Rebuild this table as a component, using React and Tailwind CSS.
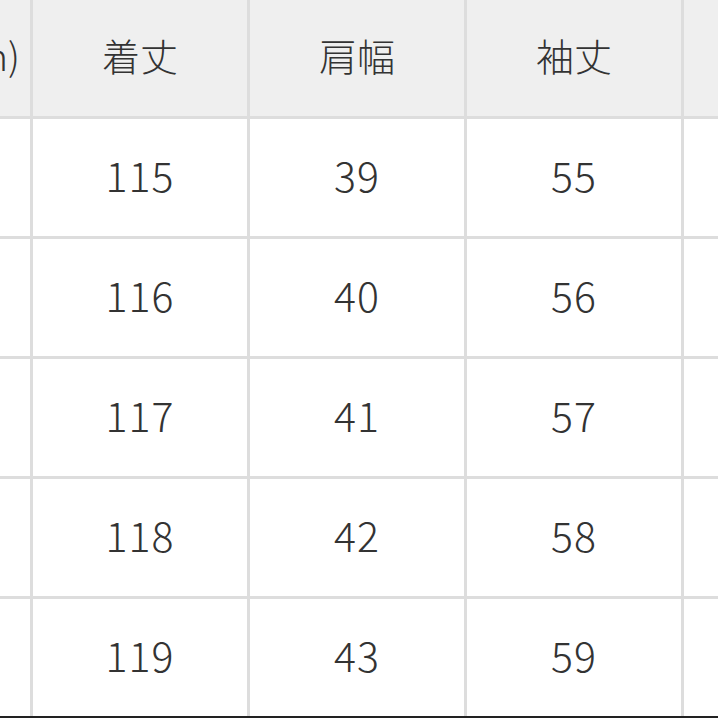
import React from 'react';

const font = { fontFamily: '"Noto Sans CJK JP", "Noto Sans", sans-serif' };

const headers = ['着丈', '肩幅', '袖丈'];
const rows = [
  ['115', '39', '55'],
  ['116', '40', '56'],
  ['117', '41', '57'],
  ['118', '42', '58'],
  ['119', '43', '59'],
];

const App = () => {
  return (
    <div className="w-[718px] h-[718px] overflow-hidden bg-white" style={font}>
      <div className="grid grid-cols-[30px_214px_214px_214px_1fr] grid-rows-[116px_117px_117px_117px_117px_117px] gap-[3px] bg-[#dddddd] h-[716px]">
        <div className="bg-[#efefef] flex items-center justify-end overflow-hidden pr-[10px] pb-[7px]">
          <span className="whitespace-nowrap text-[38px] font-light text-[#333333] leading-none">(cm)</span>
        </div>
        {headers.map((h) => (
          <div key={h} className="bg-[#efefef] flex items-center justify-center pb-[7px] text-[38px] font-light text-[#333333] leading-none">
            {h}
          </div>
        ))}
        <div className="bg-[#efefef]" />
        {rows.map((r, i) => (
          <React.Fragment key={i}>
            <div className="bg-white" />
            {r.map((v, j) => (
              <div key={j} className="bg-white flex items-center justify-center pb-[7px] text-[41px] font-light tracking-[1px] text-[#333333] leading-none">
                {v}
              </div>
            ))}
            <div className="bg-white" />
          </React.Fragment>
        ))}
      </div>
      <div className="h-[2px] bg-[#222222]" />
    </div>
  );
};

export default App;
